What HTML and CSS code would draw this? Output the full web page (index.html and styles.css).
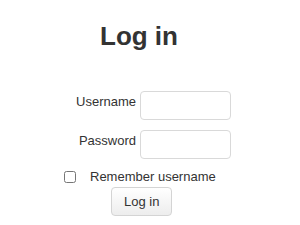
FILE: index.html
```html
<!DOCTYPE html>
<html lang="en">
<head>
  <meta charset="UTF-8" />
  <title>Log in</title>
  <link rel="stylesheet" href="styles.css">
</head>
<body>
  <div class="login">
    <h2 class="title">Log in</h2>
    <form class="login-form" onsubmit="return false">
      <div class="fields">
        <label for="username">Username</label>
        <input type="text" id="username" />
        <label for="password">Password</label>
        <input type="password" id="password" />
      </div>
      <div class="remember">
        <input type="checkbox" id="rememberusername" />
        <label for="rememberusername">Remember username</label>
      </div>
      <div class="actions">
        <button type="submit">Log in</button>
      </div>
    </form>
  </div>
</body>
</html>
```

FILE: styles.css
```css
body {
  margin: 0;
  background: #fff;
  color: #333;
  font-family: "Liberation Sans", Arial, sans-serif;
  font-size: 13px;
}

.login {
  padding-top: 20px;
}

.title {
  margin: 0 0 39px 100px;
  font-size: 26px;
  font-weight: bold;
  line-height: 32px;
  color: #333;
}

.fields {
  display: grid;
  grid-template-columns: 136px 91px;
  column-gap: 4px;
  row-gap: 10px;
}

.fields label {
  justify-self: end;
  padding-top: 3px;
  line-height: 15px;
}

.fields input {
  box-sizing: border-box;
  width: 91px;
  height: 29px;
  margin: 0;
  border: 1px solid #d9d9d9;
  border-radius: 4px;
  padding: 4px 6px;
  font: inherit;
}

.remember {
  display: flex;
  align-items: center;
  margin-top: 10px;
  padding-left: 64px;
}

.remember input {
  width: 12px;
  height: 12px;
  margin: 0 14px 0 0;
}

.actions {
  padding: 3px 0 0 111px;
}

.actions button {
  height: 29px;
  padding: 0 12px;
  border: 1px solid #d4d4d4;
  border-radius: 4px;
  background: linear-gradient(#fff, #ededed);
  color: #333;
  font: inherit;
}
```
